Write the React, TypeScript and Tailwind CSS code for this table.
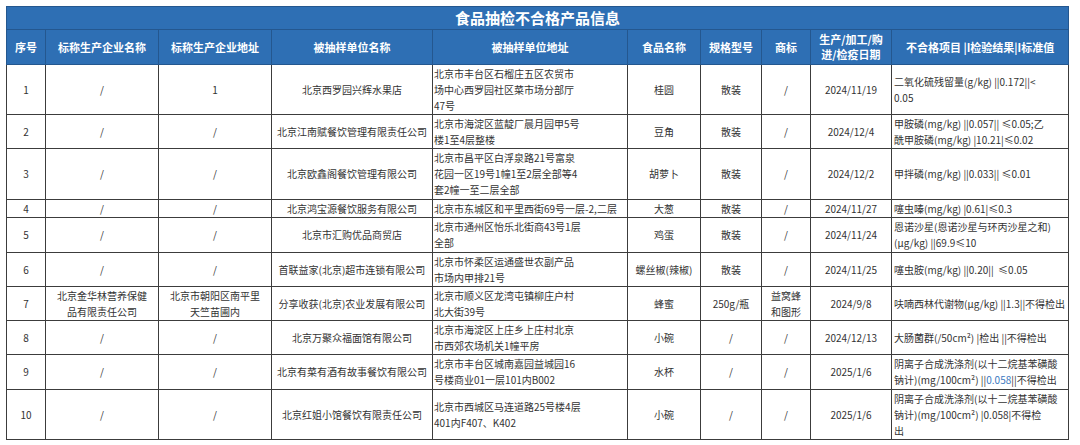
import React from "react";

type Row = {
  no: string;
  maker: string[];
  makerAddr: string[];
  unit: string;
  addr: string[];
  food: string;
  spec: string;
  brand: string[];
  date: string;
  item: React.ReactNode[];
  h: string;
};

const rows: Row[] = [
  {
    no: "1",
    maker: ["/"],
    makerAddr: ["1"],
    unit: "北京西罗园兴辉水果店",
    addr: ["北京市丰台区石榴庄五区农贸市", "场中心西罗园社区菜市场分部厅", "47号"],
    food: "桂圆",
    spec: "散装",
    brand: ["/"],
    date: "2024/11/19",
    item: ["二氧化硫残留量(g/kg) ||0.172||<", "0.05"],
    h: "h-[50px]",
  },
  {
    no: "2",
    maker: ["/"],
    makerAddr: ["/"],
    unit: "北京江南赋餐饮管理有限责任公司",
    addr: ["北京市海淀区蓝靛厂晨月园甲5号", "楼1至4层整楼"],
    food: "豆角",
    spec: "散装",
    brand: ["/"],
    date: "2024/12/4",
    item: ["甲胺磷(mg/kg) ||0.057|| ≤0.05;乙", "酰甲胺磷(mg/kg) |10.21|≤0.02"],
    h: "h-[34px]",
  },
  {
    no: "3",
    maker: ["/"],
    makerAddr: ["/"],
    unit: "北京欧鑫阁餐饮管理有限公司",
    addr: ["北京市昌平区白浮泉路21号富泉", "花园一区19号1幢1至2层全部等4", "套2幢一至二层全部"],
    food: "胡萝卜",
    spec: "散装",
    brand: ["/"],
    date: "2024/12/2",
    item: ["甲拌磷(mg/kg) ||0.033|| ≤0.01"],
    h: "h-[51px]",
  },
  {
    no: "4",
    maker: ["/"],
    makerAddr: ["/"],
    unit: "北京鸿宝源餐饮服务有限公司",
    addr: ["北京市东城区和平里西街69号一层-2,二层"],
    food: "大葱",
    spec: "散装",
    brand: ["/"],
    date: "2024/11/27",
    item: ["噻虫嗪(mg/kg) |0.61|≤0.3"],
    h: "h-[18px]",
  },
  {
    no: "5",
    maker: ["/"],
    makerAddr: ["/"],
    unit: "北京市汇购优品商贸店",
    addr: ["北京市通州区怡乐北街商43号1层", "全部"],
    food: "鸡蛋",
    spec: "散装",
    brand: ["/"],
    date: "2024/11/24",
    item: ["恩诺沙星(恩诺沙星与环丙沙星之和)", "(μg/kg) ||69.9≤10"],
    h: "h-[35px]",
  },
  {
    no: "6",
    maker: ["/"],
    makerAddr: ["/"],
    unit: "首联益家(北京)超市连锁有限公司",
    addr: ["北京市怀柔区运通盛世农副产品", "市场内甲排21号"],
    food: "螺丝椒(辣椒)",
    spec: "散装",
    brand: ["/"],
    date: "2024/11/25",
    item: ["噻虫胺(mg/kg) ||0.20||  ≤0.05"],
    h: "h-[34px]",
  },
  {
    no: "7",
    maker: ["北京金华林营养保健", "品有限责任公司"],
    makerAddr: ["北京市朝阳区南平里", "天竺苗圃内"],
    unit: "分享收获(北京)农业发展有限公司",
    addr: ["北京市顺义区龙湾屯镇柳庄户村", "北大街39号"],
    food: "蜂蜜",
    spec: "250g/瓶",
    brand: ["益窝蜂", "和图形"],
    date: "2024/9/8",
    item: ["呋喃西林代谢物(μg/kg) ||1.3||不得检出"],
    h: "h-[34px]",
  },
  {
    no: "8",
    maker: ["/"],
    makerAddr: ["/"],
    unit: "北京万聚众福面馆有限公司",
    addr: ["北京市海淀区上庄乡上庄村北京", "市西郊农场机关1幢平房"],
    food: "小碗",
    spec: "/",
    brand: ["/"],
    date: "2024/12/13",
    item: ["大肠菌群(/50cm²) |检出 ||不得检出"],
    h: "h-[34px]",
  },
  {
    no: "9",
    maker: ["/"],
    makerAddr: ["/"],
    unit: "北京有菜有酒有故事餐饮有限公司",
    addr: ["北京市丰台区城南嘉园益城园16", "号楼商业01一层101内B002"],
    food: "水杯",
    spec: "/",
    brand: ["/"],
    date: "2025/1/6",
    item: [
      "阴离子合成洗涤剂(以十二烷基苯磺酸",
      <>
        钠计)(mg/100cm²) ||<span className="text-[#3a78c0]">0.058</span>||不得检出
      </>,
    ],
    h: "h-[35px]",
  },
  {
    no: "10",
    maker: ["/"],
    makerAddr: ["/"],
    unit: "北京红姐小馆餐饮有限责任公司",
    addr: ["北京市西城区马连道路25号楼4层", "401内F407、K402"],
    food: "小碗",
    spec: "/",
    brand: ["/"],
    date: "2025/1/6",
    item: ["阴离子合成洗涤剂(以十二烷基苯磺酸", "钠计)(mg/100cm²) |0.058|不得检", "出"],
    h: "h-[50px]",
  },
];

const headers: React.ReactNode[] = [
  "序号",
  "标称生产企业名称",
  "标称生产企业地址",
  "被抽样单位名称",
  "被抽样单位地址",
  "食品名称",
  "规格型号",
  "商标",
  <>
    生产/加工/购
    <br />
    进/检疫日期
  </>,
  "不合格项目 |I检验结果|I标准值",
];

const widths = [39, 113, 113, 161, 195, 73, 61, 49, 81, 177];

function Lines({ lines }: { lines: React.ReactNode[] }) {
  return (
    <>
      {lines.map((l, i) => (
        <div key={i}>{l}</div>
      ))}
    </>
  );
}

const cell = "border border-[#3c3c3c] p-0 align-middle";

export default function App() {
  return (
    <div
      className="bg-white w-[1080px] h-[445px] pt-[6px] pl-[6px]"
      style={{ fontFamily: '"Noto Sans CJK SC", "Noto Sans", sans-serif' }}
    >
      <table className="table-fixed border-collapse w-[1063px] text-[10px] leading-[16px] text-[#333]">
        <colgroup>
          {widths.map((w, i) => (
            <col key={i} style={{ width: w }} />
          ))}
        </colgroup>
        <thead>
          <tr className="h-[23px]">
            <td
              colSpan={10}
              className="bg-[#2e6fb4] border border-[#24578f] text-center text-white font-bold text-[15px] leading-[20px] p-0"
            >
              食品抽检不合格产品信息
            </td>
          </tr>
          <tr className="h-[35px]">
            {headers.map((h, i) => (
              <th
                key={i}
                className="bg-[#2e6fb4] border border-[#24578f] text-center text-white font-bold text-[11px] leading-[15px] p-0 align-middle"
              >
                {h}
              </th>
            ))}
          </tr>
        </thead>
        <tbody>
          {rows.map((r) => (
            <tr key={r.no} className={r.h}>
              <td className={`${cell} text-center`}>{r.no}</td>
              <td className={`${cell} text-center`}>
                <Lines lines={r.maker} />
              </td>
              <td className={`${cell} text-center`}>
                <Lines lines={r.makerAddr} />
              </td>
              <td className={`${cell} text-center`}>{r.unit}</td>
              <td className={`${cell} text-left px-[1px] whitespace-nowrap`}>
                <Lines lines={r.addr} />
              </td>
              <td className={`${cell} text-center`}>{r.food}</td>
              <td className={`${cell} text-center`}>{r.spec}</td>
              <td className={`${cell} text-center`}>
                <Lines lines={r.brand} />
              </td>
              <td className={`${cell} text-center`}>{r.date}</td>
              <td className={`${cell} text-left px-[2px] whitespace-pre`}>
                <Lines lines={r.item} />
              </td>
            </tr>
          ))}
        </tbody>
      </table>
    </div>
  );
}
